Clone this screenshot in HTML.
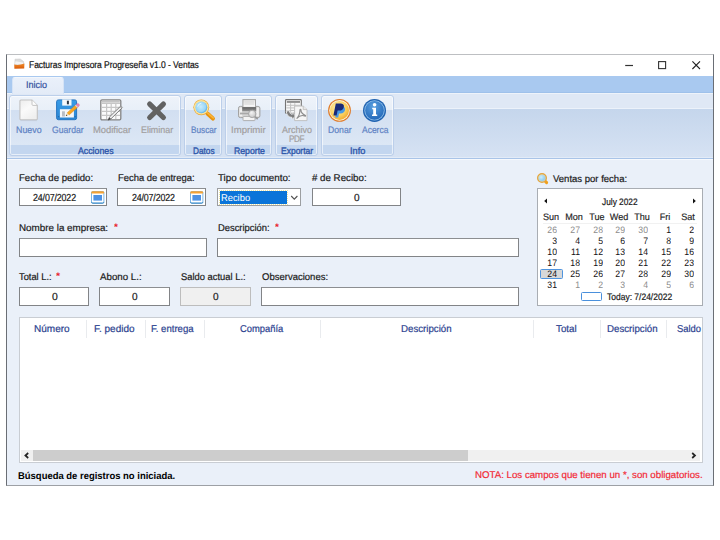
<!DOCTYPE html>
<html lang="es"><head><meta charset="utf-8"><title>Facturas Impresora Progreseña v1.0 - Ventas</title>
<style>
html,body{margin:0;padding:0;background:#fff;}
body{width:720px;height:540px;position:relative;overflow:hidden;font-family:"Liberation Sans",sans-serif;}
div,span,svg{position:absolute;box-sizing:border-box;}
.t{z-index:3;text-rendering:geometricPrecision;white-space:nowrap;line-height:1;transform-origin:0 0;}
.t.r{text-align:right;transform-origin:100% 0;}
.t.c{text-align:center;transform-origin:50% 0;}
#win{left:6px;top:54px;width:708px;height:432px;border:1px solid #6a6e75;border-top-color:#bdbfc2;border-bottom-color:#9da0a5;background:#eaf0f9;}
#title{left:7px;top:55px;width:706px;height:21px;background:#fff;}
#tabs{left:7px;top:76px;width:706px;height:17px;background:#a9c9f0;}
#tab{z-index:2;left:12px;top:77px;width:52px;height:17px;background:linear-gradient(#eaf0fa,#e3ebf7);border:1px solid #d5e3f6;border-top-color:#f3f7fc;border-bottom:none;border-radius:3px 3px 0 0;}
#rib{left:7px;top:92px;width:706px;height:68px;background:linear-gradient(#9fc1ea 0,#9fc1ea 1px,#eef3fa 1px,#eef3fa 2px,#dfe8f5 2px,#dfe8f5 16px,#ecf2fa 16px,#ecf2fa 17px,#c5d6ec 17px,#d6e2f3 65px,#e2ebf7 65px,#e2ebf7 66px,#a9c4e8 66px,#a9c4e8 67px,#f6f9fd 67px,#f6f9fd 68px);}
.g{top:95px;height:61px;border:1px solid #bccfea;border-radius:3px;background:linear-gradient(#eef3fa 0,#e8eff8 14.5px,#d2dff1 14.5px,#dce7f5 49px,#c3d6ef 49px,#c3d6ef 61px);box-shadow:inset 0 0 0 1px rgba(255,255,255,.6);}
.in{background:#fff;border:1px solid #828487;border-top-color:#8c8e91;}
.in.dis{background:#f0f0f0;border-color:#bdbdbd;}
#grid{left:19px;top:317px;width:684px;height:146px;background:#fff;border:1px solid #c9cdd3;}
.sep{top:320px;width:1px;height:18px;background:#e9ebee;}
#sb{left:21px;top:450px;width:679px;height:11px;background:#f0f0f0;}
#thumb{left:33px;top:450px;width:435px;height:11px;background:#cdcdcd;}
#cal{left:537px;top:188px;width:166px;height:118px;background:#fff;border:1px solid #a9adb3;}

</style></head><body>
<div id="win"></div>
<div id="title"></div>
<div id="tabs"></div>
<div id="tab"></div>
<div id="rib"></div>
<div class="g" style="left:9px;width:172px"></div>
<div class="g" style="left:184px;width:38px"></div>
<div class="g" style="left:225px;width:47px"></div>
<div class="g" style="left:275px;width:43px"></div>
<div class="g" style="left:321px;width:73px"></div>

<!-- inputs -->
<div class="in" style="left:19px;top:188px;width:88px;height:18px"></div>
<div class="in" style="left:117px;top:188px;width:89px;height:18px"></div>
<div class="in" style="left:217px;top:188px;width:84px;height:18px;border-color:#9c9ea1"></div>
<div style="left:220px;top:191px;width:66.5px;height:12.5px;background:#0a74d9;outline:1px dotted #ece3a0;outline-offset:0"></div>
<div class="in" style="left:312px;top:188px;width:89px;height:18px"></div>
<div class="in" style="left:19px;top:238px;width:188px;height:19px"></div>
<div class="in" style="left:217px;top:238px;width:302px;height:19px"></div>
<div class="in" style="left:19px;top:287px;width:70px;height:19px"></div>
<div class="in" style="left:99px;top:287px;width:71px;height:19px"></div>
<div class="in dis" style="left:180px;top:287px;width:71px;height:19px"></div>
<div class="in" style="left:261px;top:287px;width:258px;height:19px"></div>

<div id="grid"></div>
<div class="sep" style="left:86px"></div>
<div class="sep" style="left:145px"></div>
<div class="sep" style="left:204px"></div>
<div class="sep" style="left:320px"></div>
<div class="sep" style="left:533px"></div>
<div class="sep" style="left:600px"></div>
<div class="sep" style="left:666px"></div>
<div id="sb"></div>
<div id="thumb"></div>
<div id="cal"></div>
<div style="left:543px;top:223px;width:154px;height:1px;background:#f1f1f1"></div>
<div style="left:540px;top:269px;width:23px;height:10px;background:#d8d8d8;border:1px solid #4f94de;border-radius:1.5px"></div>
<div style="left:581px;top:292px;width:21px;height:9px;background:#fff;border:1px solid #4a90dc;border-radius:1.5px"></div>
<!-- title icon -->
<svg style="left:13px;top:58px" width="13" height="12" viewBox="0 0 13 12">
 <defs><linearGradient id="gOr" x1="0" y1="0" x2="0" y2="1"><stop offset="0" stop-color="#f08a2a"/><stop offset="1" stop-color="#d85a08"/></linearGradient></defs>
 <path d="M2 1.2 L7.2 1 L10.6 3.6 L10.8 7 L1.8 7 Z" fill="#dcdcdc" stroke="#c4c4c4" stroke-width=".5"/>
 <path d="M2.4 3.2 L9.8 4.4 L10.4 6.6 L2 6.6 Z" fill="#f4f4f4"/>
 <path d="M1.2 6.6 Q6 7.6 11.4 5.6 L11.2 10.6 L1.4 10.8 Z" fill="url(#gOr)"/>
</svg>
<!-- window buttons -->
<svg style="left:620px;top:55.5px" width="90" height="18" viewBox="0 0 90 18">
 <path d="M5.2 9.5 H13" stroke="#333" stroke-width="1.2"/>
 <rect x="38.6" y="5.6" width="7" height="7" fill="none" stroke="#333" stroke-width="1.1"/>
 <path d="M72.4 5.4 L80 13 M80 5.4 L72.4 13" stroke="#222" stroke-width="1.1"/>
</svg>
<!-- Nuevo -->
<svg style="left:18px;top:98px" width="22" height="24" viewBox="0 0 22 24">
 <defs><linearGradient id="gPg" x1="0" y1="0" x2=".6" y2="1"><stop offset="0" stop-color="#ececec"/><stop offset=".5" stop-color="#fafafa"/><stop offset="1" stop-color="#efefef"/></linearGradient></defs>
 <path d="M2.9 2 H14 L19.3 7.4 V20.8 Q19.3 21.8 18.3 21.8 H2.9 Q1.9 21.8 1.9 20.8 V3 Q1.9 2 2.9 2 Z" fill="url(#gPg)" stroke="#c2c2c2" stroke-width="1.1"/>
 <path d="M14 2 V6.4 Q14 7.4 15 7.4 H19.3" fill="#fdfdfd" stroke="#bdbdbd" stroke-width=".9"/>
 <path d="M2.6 22.6 H18.8" stroke="#b9c2cf" stroke-opacity=".7" stroke-width=".8"/>
</svg>
<!-- Guardar -->
<svg style="left:55px;top:98px" width="26" height="24" viewBox="0 0 26 24">
 <defs><linearGradient id="gFl" x1="0" y1="0" x2="0" y2="1"><stop offset="0" stop-color="#3a9de8"/><stop offset="1" stop-color="#2a84d2"/></linearGradient>
 <linearGradient id="gPen" x1="0" y1="0" x2="1" y2="1"><stop offset="0" stop-color="#ffd052"/><stop offset=".55" stop-color="#f9a21c"/><stop offset="1" stop-color="#e8860a"/></linearGradient></defs>
 <rect x="1.6" y="1.9" width="20" height="19.8" rx="1.8" fill="url(#gFl)" stroke="#2876c0" stroke-width="1"/>
 <rect x="7.2" y="1.4" width="9.3" height="6.2" fill="#f6f8fb"/>
 <rect x="11.9" y="2.7" width="2" height="3.6" fill="#2f3a48"/>
 <rect x="4.9" y="11.2" width="14" height="8.3" fill="#f5f7fa"/>
 <rect x="7" y="13.3" width="2.9" height="5.2" fill="#b9bec6"/>
 <rect x="3.2" y="18.2" width="1" height="1" fill="#1d5a96"/><rect x="19.6" y="18.2" width="1" height="1" fill="#1d5a96"/>
 <path d="M12 14.9 L20.4 7.2 L22.5 9.4 L14 17.1 Z" fill="url(#gPen)" stroke="#d07c0c" stroke-width=".4"/>
 <path d="M10.8 18 L12 14.9 L14 17.1 Z" fill="#f3d9a8"/>
 <path d="M10.8 18 L11.4 16.4 L12.4 17.5 Z" fill="#2a2418"/>
 <path d="M20.4 7.2 L22 5.7 Q23.2 5 24 6 Q24.8 7 24.2 7.9 L22.5 9.4 Z" fill="#ea86b4" stroke="#d0609a" stroke-width=".3"/>
 <path d="M20 7.6 L20.8 6.8 L22.9 9 L22.1 9.8 Z" fill="#d9dde2"/>
</svg>
<!-- Modificar -->
<svg style="left:99px;top:98px" width="26" height="24" viewBox="0 0 26 24">
 <rect x="1.8" y="1.8" width="20" height="20" rx="1.2" fill="#fbfbfb" stroke="#838383" stroke-width="1.3"/>
 <rect x="2.8" y="2.8" width="18" height="1.8" fill="#c4c4c4"/>
 <path d="M2.6 5.4 H21 M2.6 9.4 H21 M2.6 13.4 H21 M2.6 17.4 H21 M7.6 5 V21 M12.2 5 V21 M16.8 5 V21" stroke="#c6c6c6" stroke-width="1.2"/>
 <path d="M9.4 21.8 L10.6 18.8 L21.2 8.6 L22.8 10.2 L12.2 20.6 Z" fill="#f1f1f1" stroke="#6f6f6f" stroke-width=".9"/>
 <path d="M8.8 22.4 L10.2 19.4 L11.8 21 Z" fill="#444"/>
 <path d="M21.2 8.6 L22 7.8 L23.6 9.4 L22.8 10.2 Z" fill="#b5b5b5" stroke="#8a8a8a" stroke-width=".5"/>
</svg>
<!-- Eliminar X -->
<svg style="left:145px;top:99px" width="24" height="24" viewBox="0 0 24 24">
 <path d="M4.7 5.1 L18.4 18.5 M18.4 5.1 L4.7 18.5" stroke="#626262" stroke-width="5.2" stroke-linecap="round"/>
</svg>
<!-- Buscar -->
<svg style="left:191px;top:97px" width="26" height="26" viewBox="0 0 26 26">
 <defs><radialGradient id="gLens" cx=".45" cy=".45" r=".6"><stop offset="0" stop-color="#c9ecfb"/><stop offset=".7" stop-color="#9ad6f8"/><stop offset="1" stop-color="#3f9fe6"/></radialGradient>
 <linearGradient id="gHan" x1="0" y1="1" x2="1" y2="0"><stop offset="0" stop-color="#f09410"/><stop offset="1" stop-color="#fdc24a"/></linearGradient></defs>
 <path d="M16.4 16.6 L21.9 21.6" stroke="#e8920c" stroke-width="4" stroke-linecap="round"/>
 <path d="M16.6 15.8 L22.3 21" stroke="#fbb53a" stroke-width="1.6" stroke-linecap="round"/>
 <circle cx="10.3" cy="10.3" r="7.9" fill="#e8a534"/>
 <circle cx="10.3" cy="10.3" r="7.3" fill="#fbe39a"/>
 <circle cx="10.3" cy="10.3" r="5.9" fill="url(#gLens)"/>
 <path d="M6.6 9.6 Q7.2 6.6 10.4 6.2" fill="none" stroke="#fff" stroke-opacity=".7" stroke-width="1"/>
</svg>
<!-- Imprimir -->
<svg style="left:237px;top:97px" width="26" height="26" viewBox="0 0 26 26">
 <defs><linearGradient id="gPr1" x1="0" y1="0" x2="0" y2="1"><stop offset="0" stop-color="#e2e2e2"/><stop offset="1" stop-color="#fcfcfc"/></linearGradient>
 <linearGradient id="gPr2" x1="0" y1="0" x2="0" y2="1"><stop offset="0" stop-color="#5e5e5e"/><stop offset="1" stop-color="#949494"/></linearGradient>
 <radialGradient id="gPr3" cx=".4" cy=".35" r=".7"><stop offset="0" stop-color="#f4f4f4"/><stop offset="1" stop-color="#c4c4c4"/></radialGradient></defs>
 <rect x="1.5" y="9.4" width="21.4" height="11.2" rx="1.8" fill="#dadada" stroke="#a2a2a2" stroke-width="1"/>
 <rect x="2.6" y="10.6" width="2.4" height="8.6" fill="#f0f0f0"/><rect x="19.4" y="10.6" width="2.4" height="8.6" fill="#f0f0f0"/>
 <rect x="5.9" y="2.6" width="12.6" height="7.8" fill="url(#gPr1)" stroke="#a4a4a4" stroke-width="1"/>
 <path d="M7.4 5 H17 M7.4 7 H17" stroke="#d2d2d2" stroke-width=".9"/>
 <rect x="5.2" y="10.2" width="14" height="4.1" fill="url(#gPr2)"/>
 <rect x="3" y="15.6" width="9" height="1.8" fill="#a8a8a8"/>
 <rect x="6" y="19.4" width="12" height="4.2" rx=".6" fill="#f4f4f4" stroke="#a9a9a9" stroke-width=".9"/>
 <path d="M17.8 19.6 L20.2 21.6" stroke="#9a9a9a" stroke-width="1.8" stroke-linecap="round"/>
 <circle cx="15.2" cy="16.9" r="3.7" fill="url(#gPr3)" stroke="#a6a6a6" stroke-width="1"/>
</svg>
<!-- Archivo PDF -->
<svg style="left:284px;top:98px" width="26" height="24" viewBox="0 0 26 24">
 <rect x="1.5" y="1.6" width="15.8" height="13.8" rx=".8" fill="#f7f7f7" stroke="#757575" stroke-width="1.1"/>
 <rect x="2.8" y="3" width="13.2" height="1.9" fill="#8f8f8f"/>
 <path d="M2.4 7.3 H16.4 M2.4 9.9 H16.4 M2.4 12.5 H16.4 M6.6 5.2 V14.8 M10.8 5.2 V14.8" stroke="#c2c2c2" stroke-width="1"/>
 <path d="M2.2 13.2 L5.4 12.6 Q5.6 16.2 8.2 16.4 L8.2 14.4 L11.6 18 L8 21.4 L8 19.4 Q3 19.4 2.2 13.2 Z" fill="#7d7d7d" stroke="#f4f4f4" stroke-width=".8"/>
 <path d="M10.6 8.1 H19.2 L23 11.6 V22.6 H10.6 Z" fill="#f6f6f6" stroke="#bdbdbd" stroke-width=".9"/>
 <path d="M19.2 8.1 V11.6 H23" fill="#e9e9e9" stroke="#b4b4b4" stroke-width=".7"/>
 <path d="M12.6 20.6 Q15.8 17.8 16 11.6 Q16.8 10.6 17 12 Q16.6 15 21.4 17.4 Q22 18.4 20.6 18 Q16.6 16.4 12.6 20.6" fill="none" stroke="#8e8e8e" stroke-width="1.1"/>
</svg>
<!-- Donar -->
<svg style="left:326px;top:97px" width="27" height="27" viewBox="0 0 27 27">
 <defs><radialGradient id="gDon" cx=".4" cy=".35" r=".75"><stop offset="0" stop-color="#fff0b4"/><stop offset=".6" stop-color="#fbcf5e"/><stop offset="1" stop-color="#f0a024"/></radialGradient></defs>
 <circle cx="13.5" cy="13.4" r="11.4" fill="#e07a28"/>
 <circle cx="13.5" cy="13.4" r="10.3" fill="#fdf3d8"/>
 <circle cx="13.5" cy="13.4" r="9.5" fill="url(#gDon)"/>
 <path d="M11.4 9.4 H16.2 Q19.6 9.8 19 13 Q18.2 16.4 14.6 16.4 H13 L12.2 20.6 H9.2 Z" fill="#4a9ae4"/>
 <path d="M9.8 6.4 H15 Q18.6 6.8 17.8 10.2 Q17 13.6 13.2 13.6 H11.6 L10.6 18.4 H7.4 Z" fill="#1b2a78"/>
</svg>
<!-- Acerca -->
<svg style="left:361px;top:97px" width="27" height="27" viewBox="0 0 27 27">
 <defs><radialGradient id="gInf" cx=".45" cy=".3" r=".8"><stop offset="0" stop-color="#5aa0e0"/><stop offset="1" stop-color="#1e62b4"/></radialGradient></defs>
 <circle cx="13.5" cy="13.4" r="11.5" fill="#1f62b0"/>
 <circle cx="13.5" cy="13.4" r="10.2" fill="#8bbce8"/>
 <circle cx="13.5" cy="13.4" r="9.3" fill="url(#gInf)"/>
 <circle cx="13.6" cy="7.8" r="1.8" fill="#fff"/>
 <path d="M11.2 10.8 H15 V17.6 H16.2 V19 H11 V17.6 H12.2 V12.2 H11.2 Z" fill="#fff"/>
</svg>
<!-- calendar icons in date inputs -->
<svg style="left:91px;top:191px" width="14" height="13" viewBox="0 0 14 13">
 <rect x=".5" y=".6" width="12.4" height="11.4" rx="1" fill="#fff" stroke="#7bb6e6" stroke-width="1"/>
 <path d="M.3 1.6 Q.3 .2 1.6 .2 H11.8 Q13.1 .2 13.1 1.6 V2.6 H.3 Z" fill="#f5a334"/>
 <rect x="2.4" y="4" width="8.6" height="5.6" fill="#4d92e4"/>
 <path d="M.6 11.2 Q.6 12.2 1.6 12.2 H11.8 Q12.8 12.2 12.8 11.2" fill="none" stroke="#3585c2" stroke-width="1"/>
</svg>
<svg style="left:190px;top:191px" width="14" height="13" viewBox="0 0 14 13">
 <rect x=".5" y=".6" width="12.4" height="11.4" rx="1" fill="#fff" stroke="#7bb6e6" stroke-width="1"/>
 <path d="M.3 1.6 Q.3 .2 1.6 .2 H11.8 Q13.1 .2 13.1 1.6 V2.6 H.3 Z" fill="#f5a334"/>
 <rect x="2.4" y="4" width="8.6" height="5.6" fill="#4d92e4"/>
 <path d="M.6 11.2 Q.6 12.2 1.6 12.2 H11.8 Q12.8 12.2 12.8 11.2" fill="none" stroke="#3585c2" stroke-width="1"/>
</svg>
<!-- combo chevron -->
<svg style="left:289px;top:193px" width="11" height="9" viewBox="0 0 11 9">
 <path d="M2.2 3 L5.3 6.1 L8.4 3" fill="none" stroke="#505050" stroke-width="1.1"/>
</svg>
<!-- small magnifier -->
<svg style="left:536px;top:172px" width="14" height="14" viewBox="0 0 14 14">
 <defs><radialGradient id="gLs" cx=".4" cy=".4" r=".65"><stop offset="0" stop-color="#cdeefc"/><stop offset="1" stop-color="#6fbdf2"/></radialGradient></defs>
 <path d="M9.4 9.4 L10.6 10.6" stroke="#f0a01c" stroke-width="3" stroke-linecap="round"/>
 <circle cx="6" cy="6" r="4.3" fill="url(#gLs)" stroke="#e6a53c" stroke-width="1.4"/>
 <circle cx="6" cy="6" r="3.4" fill="none" stroke="#f7dca0" stroke-width=".5"/>
</svg>
<!-- calendar nav arrows -->
<svg style="left:543px;top:197px" width="6" height="8" viewBox="0 0 6 8"><path d="M4 1.4 V6.6 L1.2 4 Z" fill="#111"/></svg>
<svg style="left:691px;top:197px" width="6" height="8" viewBox="0 0 6 8"><path d="M2 1.4 V6.6 L4.8 4 Z" fill="#111"/></svg>
<!-- scroll arrows -->
<svg style="left:20px;top:450px" width="13" height="11" viewBox="0 0 13 11"><path d="M8.2 3 L5.4 5.5 L8.2 8" fill="none" stroke="#222" stroke-width="1.7"/></svg>
<svg style="left:687px;top:450px" width="13" height="11" viewBox="0 0 13 11"><path d="M5.2 3 L8 5.5 L5.2 8" fill="none" stroke="#222" stroke-width="1.7"/></svg>

<span class="t" id="t0" style="left:28.70px;top:61.10px;font-size:9.8px;color:#111;font-weight:400;letter-spacing:-0.070px;transform:scaleX(0.87);-webkit-text-stroke:0.2px;">Facturas Impresora Progreseña v1.0 - Ventas</span>
<span class="t" id="t1" style="left:26.36px;top:81.00px;font-size:9.8px;color:#34509e;font-weight:400;letter-spacing:0.000px;transform:scaleX(0.9224);-webkit-text-stroke:0.2px;">Inicio</span>
<span class="t" id="t2" style="left:15.70px;top:125.04px;font-size:9.4px;color:#6083c4;font-weight:400;letter-spacing:0.000px;transform:scaleX(0.9443);-webkit-text-stroke:0.2px;">Nuevo</span>
<span class="t" id="t3" style="left:51.70px;top:125.04px;font-size:9.4px;color:#6083c4;font-weight:400;letter-spacing:0.000px;transform:scaleX(0.9184);-webkit-text-stroke:0.2px;">Guardar</span>
<span class="t" id="t4" style="left:93.20px;top:125.04px;font-size:9.4px;color:#a29f9f;font-weight:400;letter-spacing:0.000px;transform:scaleX(1.0018);-webkit-text-stroke:0.2px;">Modificar</span>
<span class="t" id="t5" style="left:140.70px;top:125.04px;font-size:9.4px;color:#a29f9f;font-weight:400;letter-spacing:0.000px;transform:scaleX(0.9476);-webkit-text-stroke:0.2px;">Eliminar</span>
<span class="t" id="t6" style="left:190.70px;top:125.04px;font-size:9.4px;color:#6083c4;font-weight:400;letter-spacing:0.000px;transform:scaleX(0.8771);-webkit-text-stroke:0.2px;">Buscar</span>
<span class="t" id="t7" style="left:230.99px;top:125.04px;font-size:9.4px;color:#a29f9f;font-weight:400;letter-spacing:0.000px;transform:scaleX(1.0219);-webkit-text-stroke:0.2px;">Imprimir</span>
<span class="t" id="t8" style="left:282.20px;top:125.04px;font-size:9.4px;color:#a29f9f;font-weight:400;letter-spacing:0.000px;transform:scaleX(0.9563);-webkit-text-stroke:0.2px;">Archivo</span>
<span class="t" id="t9" style="left:288.70px;top:134.34px;font-size:9.4px;color:#a29f9f;font-weight:400;letter-spacing:-0.409px;transform:scaleX(0.87);-webkit-text-stroke:0.2px;">PDF</span>
<span class="t" id="t10" style="left:327.70px;top:125.04px;font-size:9.4px;color:#6083c4;font-weight:400;letter-spacing:0.000px;transform:scaleX(0.9238);-webkit-text-stroke:0.2px;">Donar</span>
<span class="t" id="t11" style="left:362.20px;top:125.04px;font-size:9.4px;color:#6083c4;font-weight:400;letter-spacing:0.000px;transform:scaleX(0.9045);-webkit-text-stroke:0.2px;">Acerca</span>
<span class="t" id="t12" style="left:77.70px;top:145.84px;font-size:9.4px;color:#2f57aa;font-weight:400;letter-spacing:0.000px;transform:scaleX(0.9357);-webkit-text-stroke:0.35px;">Acciones</span>
<span class="t" id="t13" style="left:192.70px;top:145.84px;font-size:9.4px;color:#2f57aa;font-weight:400;letter-spacing:0.000px;transform:scaleX(0.8816);-webkit-text-stroke:0.35px;">Datos</span>
<span class="t" id="t14" style="left:234.10px;top:145.84px;font-size:9.4px;color:#2f57aa;font-weight:400;letter-spacing:0.000px;transform:scaleX(0.9263);-webkit-text-stroke:0.35px;">Reporte</span>
<span class="t" id="t15" style="left:280.70px;top:145.84px;font-size:9.4px;color:#2f57aa;font-weight:400;letter-spacing:0.000px;transform:scaleX(0.9058);-webkit-text-stroke:0.35px;">Exportar</span>
<span class="t" id="t16" style="left:349.70px;top:145.84px;font-size:9.4px;color:#2f57aa;font-weight:400;letter-spacing:0.000px;transform:scaleX(0.9782);-webkit-text-stroke:0.35px;">Info</span>
<span class="t" id="t17" style="left:19.20px;top:174.00px;font-size:9.8px;color:#1a1a1a;font-weight:400;letter-spacing:0.000px;transform:scaleX(0.9786);-webkit-text-stroke:0.2px;">Fecha de pedido:</span>
<span class="t" id="t18" style="left:118.20px;top:174.40px;font-size:9.8px;color:#1a1a1a;font-weight:400;letter-spacing:0.000px;transform:scaleX(0.9631);-webkit-text-stroke:0.2px;">Fecha de entrega:</span>
<span class="t" id="t19" style="left:217.70px;top:174.40px;font-size:9.8px;color:#1a1a1a;font-weight:400;letter-spacing:0.000px;transform:scaleX(0.9997);-webkit-text-stroke:0.2px;">Tipo documento:</span>
<span class="t" id="t20" style="left:312.34px;top:174.40px;font-size:9.8px;color:#1a1a1a;font-weight:400;letter-spacing:0.000px;transform:scaleX(0.9924);-webkit-text-stroke:0.2px;"># de Recibo:</span>
<span class="t" id="t21" style="left:19.20px;top:224.40px;font-size:9.8px;color:#1a1a1a;font-weight:400;letter-spacing:0.000px;transform:scaleX(1.0038);-webkit-text-stroke:0.2px;">Nombre la empresa:</span>
<span class="t" id="t22" style="left:114.10px;top:223.26px;font-size:9.5px;color:#e8202a;font-weight:700;letter-spacing:0.000px;transform:scaleX(1.0532);">*</span>
<span class="t" id="t23" style="left:217.70px;top:224.40px;font-size:9.8px;color:#1a1a1a;font-weight:400;letter-spacing:0.000px;transform:scaleX(0.9572);-webkit-text-stroke:0.2px;">Descripción:</span>
<span class="t" id="t24" style="left:274.70px;top:223.26px;font-size:9.5px;color:#e8202a;font-weight:700;letter-spacing:0.000px;transform:scaleX(1.0532);">*</span>
<span class="t" id="t25" style="left:19.34px;top:273.40px;font-size:9.8px;color:#1a1a1a;font-weight:400;letter-spacing:0.000px;transform:scaleX(0.9501);-webkit-text-stroke:0.2px;">Total L.:</span>
<span class="t" id="t26" style="left:56.20px;top:272.26px;font-size:9.5px;color:#e8202a;font-weight:700;letter-spacing:0.000px;transform:scaleX(1.1);">*</span>
<span class="t" id="t27" style="left:99.70px;top:273.40px;font-size:9.8px;color:#1a1a1a;font-weight:400;letter-spacing:0.000px;transform:scaleX(0.9916);-webkit-text-stroke:0.2px;">Abono L.:</span>
<span class="t" id="t28" style="left:180.70px;top:273.40px;font-size:9.8px;color:#1a1a1a;font-weight:400;letter-spacing:0.000px;transform:scaleX(0.9564);-webkit-text-stroke:0.2px;">Saldo actual L.:</span>
<span class="t" id="t29" style="left:261.70px;top:273.40px;font-size:9.8px;color:#1a1a1a;font-weight:400;letter-spacing:0.000px;transform:scaleX(0.9709);-webkit-text-stroke:0.2px;">Observaciones:</span>
<span class="t" id="t30" style="left:32.70px;top:194.17px;font-size:10.2px;color:#1a1a1a;font-weight:400;letter-spacing:-0.162px;transform:scaleX(0.87);-webkit-text-stroke:0.2px;">24/07/2022</span>
<span class="t" id="t31" style="left:132.12px;top:194.17px;font-size:10.2px;color:#1a1a1a;font-weight:400;letter-spacing:-0.188px;transform:scaleX(0.87);-webkit-text-stroke:0.2px;">24/07/2022</span>
<span class="t" id="t32" style="left:221.20px;top:193.80px;font-size:9.8px;color:#fff;font-weight:400;letter-spacing:0.000px;transform:scaleX(0.9541);">Recibo</span>
<span class="t" id="t33" style="left:353.70px;top:194.17px;font-size:10.2px;color:#1a1a1a;font-weight:400;letter-spacing:0.000px;transform:scaleX(0.9873);-webkit-text-stroke:0.2px;">0</span>
<span class="t" id="t34" style="left:51.64px;top:293.37px;font-size:10.2px;color:#1a1a1a;font-weight:400;letter-spacing:0.000px;transform:scaleX(1.0226);-webkit-text-stroke:0.2px;">0</span>
<span class="t" id="t35" style="left:131.70px;top:293.37px;font-size:10.2px;color:#1a1a1a;font-weight:400;letter-spacing:0.000px;transform:scaleX(0.9873);-webkit-text-stroke:0.2px;">0</span>
<span class="t" id="t36" style="left:212.70px;top:293.37px;font-size:10.2px;color:#1a1a1a;font-weight:400;letter-spacing:0.000px;transform:scaleX(0.9873);-webkit-text-stroke:0.2px;">0</span>
<span class="t" id="t37" style="left:552.70px;top:175.20px;font-size:9.8px;color:#1a1a1a;font-weight:400;letter-spacing:0.000px;transform:scaleX(0.9716);-webkit-text-stroke:0.2px;">Ventas por fecha:</span>
<span class="t" id="t38" style="left:601.70px;top:196.84px;font-size:9.4px;color:#1a1a1a;font-weight:400;letter-spacing:0.000px;transform:scaleX(0.8869);-webkit-text-stroke:0.2px;">July 2022</span>
<span class="t" id="t39" style="left:606.70px;top:292.34px;font-size:9.4px;color:#1a1a1a;font-weight:400;letter-spacing:0.000px;transform:scaleX(0.905);-webkit-text-stroke:0.2px;">Today: 7/24/2022</span>
<span class="t" id="t40" style="left:34.20px;top:324.54px;font-size:10px;color:#2b3f8f;font-weight:400;letter-spacing:0.000px;transform:scaleX(1.0006);-webkit-text-stroke:0.2px;">Número</span>
<span class="t" id="t41" style="left:94.34px;top:324.54px;font-size:10px;color:#2b3f8f;font-weight:400;letter-spacing:0.000px;transform:scaleX(1.0002);-webkit-text-stroke:0.2px;">F. pedido</span>
<span class="t" id="t42" style="left:151.40px;top:324.54px;font-size:10px;color:#2b3f8f;font-weight:400;letter-spacing:0.000px;transform:scaleX(0.9576);-webkit-text-stroke:0.2px;">F. entrega</span>
<span class="t" id="t43" style="left:239.70px;top:324.54px;font-size:10px;color:#2b3f8f;font-weight:400;letter-spacing:0.000px;transform:scaleX(0.9384);-webkit-text-stroke:0.2px;">Compañía</span>
<span class="t" id="t44" style="left:401.20px;top:324.54px;font-size:10px;color:#2b3f8f;font-weight:400;letter-spacing:0.000px;transform:scaleX(0.9684);-webkit-text-stroke:0.2px;">Descripción</span>
<span class="t" id="t45" style="left:555.70px;top:324.54px;font-size:10px;color:#2b3f8f;font-weight:400;letter-spacing:0.000px;transform:scaleX(0.9751);-webkit-text-stroke:0.2px;">Total</span>
<span class="t" id="t46" style="left:607.20px;top:324.54px;font-size:10px;color:#2b3f8f;font-weight:400;letter-spacing:0.000px;transform:scaleX(0.9684);-webkit-text-stroke:0.2px;">Descripción</span>
<span class="t" id="t47" style="left:677.22px;top:324.54px;font-size:10px;color:#2b3f8f;font-weight:400;letter-spacing:0.000px;transform:scaleX(0.9422);-webkit-text-stroke:0.2px;">Saldo</span>
<span class="t" id="t48" style="left:18.38px;top:472.40px;font-size:9.8px;color:#000;font-weight:700;letter-spacing:0.000px;transform:scaleX(0.9651);">Búsqueda de registros no iniciada.</span>
<span class="t" id="t49" style="left:475.40px;top:471.40px;font-size:9.8px;color:#f22a36;font-weight:400;letter-spacing:0.000px;transform:scaleX(0.9888);-webkit-text-stroke:0.2px;">NOTA: Los campos que tienen un *, son obligatorios.</span>
<span class="t c" style="left:531.20px;width:40px;top:212.04px;font-size:9.4px;color:#222;transform:scaleX(0.97);-webkit-text-stroke:0.15px">Sun</span>
<span class="t c" style="left:553.95px;width:40px;top:212.04px;font-size:9.4px;color:#222;transform:scaleX(0.97);-webkit-text-stroke:0.15px">Mon</span>
<span class="t c" style="left:576.70px;width:40px;top:212.04px;font-size:9.4px;color:#222;transform:scaleX(0.97);-webkit-text-stroke:0.15px">Tue</span>
<span class="t c" style="left:599.45px;width:40px;top:212.04px;font-size:9.4px;color:#222;transform:scaleX(0.97);-webkit-text-stroke:0.15px">Wed</span>
<span class="t c" style="left:622.20px;width:40px;top:212.04px;font-size:9.4px;color:#222;transform:scaleX(0.97);-webkit-text-stroke:0.15px">Thu</span>
<span class="t c" style="left:644.95px;width:40px;top:212.04px;font-size:9.4px;color:#222;transform:scaleX(0.97);-webkit-text-stroke:0.15px">Fri</span>
<span class="t c" style="left:667.70px;width:40px;top:212.04px;font-size:9.4px;color:#222;transform:scaleX(0.97);-webkit-text-stroke:0.15px">Sat</span>
<span class="t r" style="left:527.00px;width:30px;top:224.94px;font-size:9.4px;color:#8c8c8c;transform:scaleX(0.93)">26</span>
<span class="t r" style="left:549.80px;width:30px;top:224.94px;font-size:9.4px;color:#8c8c8c;transform:scaleX(0.93)">27</span>
<span class="t r" style="left:572.60px;width:30px;top:224.94px;font-size:9.4px;color:#8c8c8c;transform:scaleX(0.93)">28</span>
<span class="t r" style="left:595.30px;width:30px;top:224.94px;font-size:9.4px;color:#8c8c8c;transform:scaleX(0.93)">29</span>
<span class="t r" style="left:618.10px;width:30px;top:224.94px;font-size:9.4px;color:#8c8c8c;transform:scaleX(0.93)">30</span>
<span class="t r" style="left:640.80px;width:30px;top:224.94px;font-size:9.4px;color:#111;transform:scaleX(0.93)">1</span>
<span class="t r" style="left:663.60px;width:30px;top:224.94px;font-size:9.4px;color:#111;transform:scaleX(0.93)">2</span>
<span class="t r" style="left:527.00px;width:30px;top:236.04px;font-size:9.4px;color:#111;transform:scaleX(0.93)">3</span>
<span class="t r" style="left:549.80px;width:30px;top:236.04px;font-size:9.4px;color:#111;transform:scaleX(0.93)">4</span>
<span class="t r" style="left:572.60px;width:30px;top:236.04px;font-size:9.4px;color:#111;transform:scaleX(0.93)">5</span>
<span class="t r" style="left:595.30px;width:30px;top:236.04px;font-size:9.4px;color:#111;transform:scaleX(0.93)">6</span>
<span class="t r" style="left:618.10px;width:30px;top:236.04px;font-size:9.4px;color:#111;transform:scaleX(0.93)">7</span>
<span class="t r" style="left:640.80px;width:30px;top:236.04px;font-size:9.4px;color:#111;transform:scaleX(0.93)">8</span>
<span class="t r" style="left:663.60px;width:30px;top:236.04px;font-size:9.4px;color:#111;transform:scaleX(0.93)">9</span>
<span class="t r" style="left:527.00px;width:30px;top:247.14px;font-size:9.4px;color:#111;transform:scaleX(0.93)">10</span>
<span class="t r" style="left:549.80px;width:30px;top:247.14px;font-size:9.4px;color:#111;transform:scaleX(0.93)">11</span>
<span class="t r" style="left:572.60px;width:30px;top:247.14px;font-size:9.4px;color:#111;transform:scaleX(0.93)">12</span>
<span class="t r" style="left:595.30px;width:30px;top:247.14px;font-size:9.4px;color:#111;transform:scaleX(0.93)">13</span>
<span class="t r" style="left:618.10px;width:30px;top:247.14px;font-size:9.4px;color:#111;transform:scaleX(0.93)">14</span>
<span class="t r" style="left:640.80px;width:30px;top:247.14px;font-size:9.4px;color:#111;transform:scaleX(0.93)">15</span>
<span class="t r" style="left:663.60px;width:30px;top:247.14px;font-size:9.4px;color:#111;transform:scaleX(0.93)">16</span>
<span class="t r" style="left:527.00px;width:30px;top:258.24px;font-size:9.4px;color:#111;transform:scaleX(0.93)">17</span>
<span class="t r" style="left:549.80px;width:30px;top:258.24px;font-size:9.4px;color:#111;transform:scaleX(0.93)">18</span>
<span class="t r" style="left:572.60px;width:30px;top:258.24px;font-size:9.4px;color:#111;transform:scaleX(0.93)">19</span>
<span class="t r" style="left:595.30px;width:30px;top:258.24px;font-size:9.4px;color:#111;transform:scaleX(0.93)">20</span>
<span class="t r" style="left:618.10px;width:30px;top:258.24px;font-size:9.4px;color:#111;transform:scaleX(0.93)">21</span>
<span class="t r" style="left:640.80px;width:30px;top:258.24px;font-size:9.4px;color:#111;transform:scaleX(0.93)">22</span>
<span class="t r" style="left:663.60px;width:30px;top:258.24px;font-size:9.4px;color:#111;transform:scaleX(0.93)">23</span>
<span class="t r" style="left:527.00px;width:30px;top:269.34px;font-size:9.4px;color:#111;transform:scaleX(0.93)">24</span>
<span class="t r" style="left:549.80px;width:30px;top:269.34px;font-size:9.4px;color:#111;transform:scaleX(0.93)">25</span>
<span class="t r" style="left:572.60px;width:30px;top:269.34px;font-size:9.4px;color:#111;transform:scaleX(0.93)">26</span>
<span class="t r" style="left:595.30px;width:30px;top:269.34px;font-size:9.4px;color:#111;transform:scaleX(0.93)">27</span>
<span class="t r" style="left:618.10px;width:30px;top:269.34px;font-size:9.4px;color:#111;transform:scaleX(0.93)">28</span>
<span class="t r" style="left:640.80px;width:30px;top:269.34px;font-size:9.4px;color:#111;transform:scaleX(0.93)">29</span>
<span class="t r" style="left:663.60px;width:30px;top:269.34px;font-size:9.4px;color:#111;transform:scaleX(0.93)">30</span>
<span class="t r" style="left:527.00px;width:30px;top:280.44px;font-size:9.4px;color:#111;transform:scaleX(0.93)">31</span>
<span class="t r" style="left:549.80px;width:30px;top:280.44px;font-size:9.4px;color:#8c8c8c;transform:scaleX(0.93)">1</span>
<span class="t r" style="left:572.60px;width:30px;top:280.44px;font-size:9.4px;color:#8c8c8c;transform:scaleX(0.93)">2</span>
<span class="t r" style="left:595.30px;width:30px;top:280.44px;font-size:9.4px;color:#8c8c8c;transform:scaleX(0.93)">3</span>
<span class="t r" style="left:618.10px;width:30px;top:280.44px;font-size:9.4px;color:#8c8c8c;transform:scaleX(0.93)">4</span>
<span class="t r" style="left:640.80px;width:30px;top:280.44px;font-size:9.4px;color:#8c8c8c;transform:scaleX(0.93)">5</span>
<span class="t r" style="left:663.60px;width:30px;top:280.44px;font-size:9.4px;color:#8c8c8c;transform:scaleX(0.93)">6</span>
</body></html>
